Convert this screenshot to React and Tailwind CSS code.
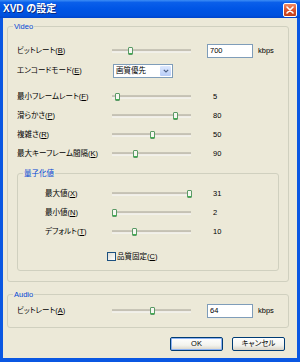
import React from "react";

// thumb offsets are measured from the left edge of each slider box
function Slider({ at }) {
  return (
    <div className="relative h-full w-[82px] shrink-0">
      <div className="absolute left-[2px] right-[1px] top-1/2 h-[3px] -translate-y-1/2 border-t border-b border-t-[#aca899] border-b-white bg-[#dedbcf]" />
      <div
        className="absolute top-1/2 h-[8px] w-[5px] -translate-y-1/2 rounded-[1px] border border-[#5b9a66] bg-[#f7f7f2] shadow-[inset_0_-1px_0_#3fb34f]"
        style={{ left: at }}
      />
    </div>
  );
}

function GroupBox({ caption, className = "", children }) {
  return (
    <div className={["relative rounded-[3px] border border-[#d0d0bf]", className].join(" ")}>
      <div className="absolute left-[5px] top-[-5px] bg-[#ece9d8] px-[1px] text-[7.5px] leading-[9px] text-[#0046d5]">
        {caption}
      </div>
      {children}
    </div>
  );
}

function TextBox({ value }) {
  return (
    <div className="flex h-[14px] w-[46px] items-center border border-[#7f9db9] bg-white pl-[2px] text-[7.5px] leading-none">
      {value}
    </div>
  );
}

// label with an underlined access key, e.g. ビットレート(B)
function Lbl({ text, k }) {
  return (
    <span>
      {text}(<span className="underline underline-offset-1">{k}</span>)
    </span>
  );
}

function Row({ label, k, at, value, sub = false, h = "h-[19px]" }) {
  return (
    <div className={["flex items-center leading-none", h, sub ? "pl-[27px]" : "pl-[9px]"].join(" ")}>
      <div className={sub ? "w-[65px] shrink-0" : "w-[93px] shrink-0"}>
        <Lbl text={label} k={k} />
      </div>
      <Slider at={at} />
      <div className="ml-[21px]">{value}</div>
    </div>
  );
}

function XpButton({ children, primary = false }) {
  return (
    <button
      className={[
        "h-[14px] w-[53px] rounded-[2px] border border-[#003c74] bg-[linear-gradient(180deg,#ffffff,#f3f3ee_60%,#d8d3c7)] text-[7.5px] leading-none text-black",
        primary ? "shadow-[inset_0_0_0_1px_#8db2f2]" : "",
      ].join(" ")}
    >
      {children}
    </button>
  );
}

export default function App() {
  return (
    <div className="flex h-[362px] w-[300px] flex-col bg-[#0a57e2] font-['Liberation_Sans','Noto_Sans_CJK_JP',sans-serif] text-[7.5px] text-black [font-feature-settings:'palt']">
      {/* title bar */}
      <div className="flex h-[18px] shrink-0 items-center justify-between bg-[linear-gradient(180deg,#3d8df5_0%,#0a5fea_14%,#0055e5_50%,#0051de_85%,#0045cc_100%)] pl-[3px] pr-[3px]">
        <div className="text-[10px] font-bold leading-none text-white [text-shadow:1px_1px_0_#0a2a80]">XVD の設定</div>
        <div className="mt-[2px] flex h-[14px] w-[14px] items-center justify-center rounded-[2px] border border-white bg-[linear-gradient(180deg,#f08a64,#d9502a_55%,#c2401a)]">
          <svg width="8" height="8" viewBox="0 0 8 8">
            <path d="M1 1L7 7M7 1L1 7" stroke="white" strokeWidth="1.6" strokeLinecap="round" />
          </svg>
        </div>
      </div>

      <div className="mx-[3px] mb-[4px] flex flex-1 flex-col bg-[#ece9d8] px-[4px] pt-[8px]">
        <GroupBox caption="Video" className="w-[282px] pb-[10px] pt-[15px]">
          <div className="flex h-[18px] items-center pl-[9px] leading-none">
            <div className="w-[93px] shrink-0">
              <Lbl text="ビットレート" k="B" />
            </div>
            <Slider at={18} />
            <div className="ml-[15px]">
              <TextBox value="700" />
            </div>
            <div className="ml-[5px]">kbps</div>
          </div>

          <div className="mt-[2px] flex h-[18px] items-center pl-[9px] leading-none">
            <div className="w-[96px] shrink-0">
              <Lbl text="エンコードモード" k="E" />
            </div>
            <div className="flex h-[14px] w-[60px] items-stretch border border-[#7f9db9] bg-white">
              <div className="flex flex-1 items-center pl-[2px]">画質優先</div>
              <div className="m-[1px] flex w-[11px] items-center justify-center rounded-[1px] bg-[linear-gradient(180deg,#dde8fe,#b8cdf8)]">
                <svg width="6" height="4" viewBox="0 0 6 4">
                  <path d="M0.8 0.8L3 3L5.2 0.8" stroke="#4d6185" strokeWidth="1.2" fill="none" />
                </svg>
              </div>
            </div>
          </div>

          <div className="mt-[7px]">
            <Row label="最小フレームレート" k="F" at={5} value="5" />
            <Row label="滑らかさ" k="P" at={63} value="80" />
            <Row label="複雑さ" k="R" at={40} value="50" />
            <Row label="最大キーフレーム間隔" k="K" at={23} value="90" />
          </div>

          <GroupBox caption="量子化値" className="ml-[9px] mt-[10px] w-[262px] pb-[4px] pt-[10px]">
            <Row sub label="最大値" k="X" at={77} value="31" />
            <Row sub label="最小値" k="N" at={2} value="2" />
            <Row sub label="デフォルト" k="T" at={22} value="10" />
            <div className="mt-[6px] flex h-[19px] items-center pl-[89px] leading-none">
              <div className="h-[9px] w-[9px] border border-[#1c5180] bg-[linear-gradient(135deg,#dcdcd5,#ffffff)]" />
              <div className="ml-[1px]">
                <Lbl text="品質固定" k="C" />
              </div>
            </div>
          </GroupBox>
        </GroupBox>

        <GroupBox caption="Audio" className="mt-[12px] w-[282px] pb-[7px] pt-[7px]">
          <div className="flex h-[18px] items-center pl-[9px] leading-none">
            <div className="w-[93px] shrink-0">
              <Lbl text="ビットレート" k="A" />
            </div>
            <Slider at={40} />
            <div className="ml-[15px]">
              <TextBox value="64" />
            </div>
            <div className="ml-[5px]">kbps</div>
          </div>
        </GroupBox>

        <div className="mr-[8px] mt-[9px] flex justify-end gap-[9px]">
          <XpButton primary>OK</XpButton>
          <XpButton>キャンセル</XpButton>
        </div>
      </div>
    </div>
  );
}
